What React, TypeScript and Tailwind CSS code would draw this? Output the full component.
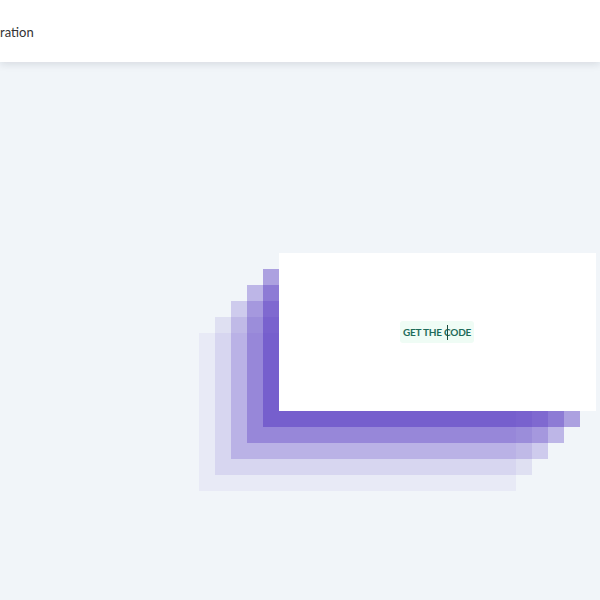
import React from 'react';

/**
 * Box shadow preview: a white card with a stacked, offset purple shadow.
 */
export default function App() {
  return (
    <div
      className="min-h-screen flex flex-col bg-[#f1f5f9]"
      style={{ fontFamily: 'Lato, "Liberation Sans", sans-serif' }}
    >
      {/* Header */}
      <header className="relative z-10 h-[62px] shrink-0 bg-white shadow-[0_2px_8px_rgba(15,23,42,0.12)] flex items-center pt-[3px]">
        <span className="text-[13px] text-[#333333]">ration</span>
      </header>

      {/* Preview */}
      <main className="flex-1 flex items-center justify-center pl-[274px] pt-[2px]">
        <div className="w-[317px] h-[158px] bg-white flex items-center justify-center shadow-[-16px_16px_rgba(70,36,188,0.4),-32px_32px_rgba(70,36,188,0.3),-48px_48px_rgba(70,36,188,0.2),-64px_64px_rgba(70,36,188,0.1),-80px_80px_rgba(70,36,188,0.05)]">
          <button className="relative h-[22px] w-[74px] pt-px whitespace-nowrap rounded-[3px] bg-[#effcf5] text-[10px] tracking-[-0.2px] font-bold text-[#1d6b5a] flex items-center justify-center">
            GET THE CODE
            <span className="absolute left-[47px] top-[4px] h-[15px] w-px bg-[#1d4d3f]" />
          </button>
        </div>
      </main>
    </div>
  );
}
